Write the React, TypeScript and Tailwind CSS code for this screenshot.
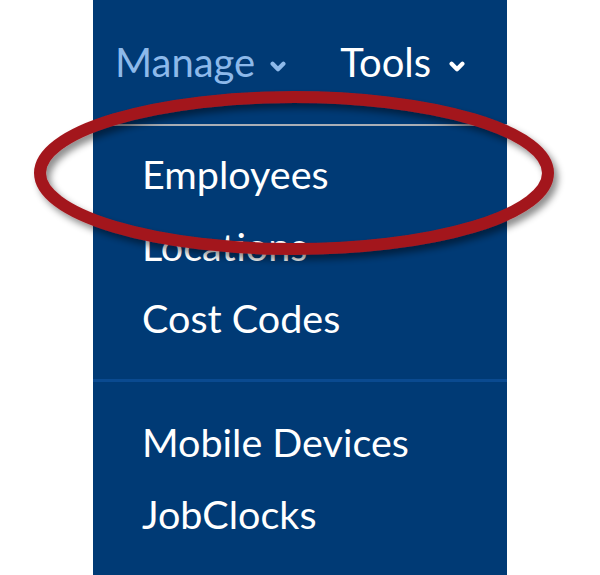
import React from "react";

function Chevron({ color }: { color: string }) {
  return (
    <svg width="16" height="12" viewBox="0 0 16 12" className="block">
      <path d="M2.6 2.8 L8 8.2 L13.4 2.8" fill="none" stroke={color} strokeWidth="4.2" strokeLinecap="round" strokeLinejoin="round" />
    </svg>
  );
}

export default function App() {
  const font = { fontFamily: "Lato, 'Open Sans', sans-serif" };
  return (
    <div className="relative w-[600px] h-[575px] bg-white overflow-hidden" style={font}>
      <div className="ml-[93px] w-[414px] h-[575px] bg-[#003a75] flex flex-col">
        <div className="h-[124px] pt-[26px] flex items-start">
          <div className="flex items-center h-[72px] leading-[72px] text-[40px]">
            <span className="ml-[22px] text-[#8db9ea]">Manage</span>
            <span className="ml-[15px] mt-[9px] flex"><Chevron color="#8db9ea" /></span>
            <span className="ml-[54px] text-white">Tools</span>
            <span className="ml-[18px] mt-[9px] flex"><Chevron color="#ffffff" /></span>
          </div>
        </div>
        <div className="h-[2px] bg-[#a9aeb6]" />
        <div className="pt-[12px] flex flex-col text-white text-[39.5px] leading-[72px] pl-[49px]">
          <div>Employees</div>
          <div>Locations</div>
          <div>Cost Codes</div>
        </div>
        <div className="mt-[25px] h-[3px] bg-[#0a4a90]" />
        <div className="pt-[24px] flex flex-col text-white text-[39.5px] leading-[72px] pl-[49px]">
          <div>Mobile Devices</div>
          <div>JobClocks</div>
        </div>
      </div>
      <svg className="absolute left-0 top-0 pointer-events-none" width="600" height="575" viewBox="0 0 600 575">
        <defs>
          <filter id="sh" x="-20%" y="-40%" width="140%" height="180%">
            <feDropShadow dx="4" dy="5" stdDeviation="3.5" floodColor="#000" floodOpacity="0.45" />
          </filter>
        </defs>
        <ellipse cx="294" cy="173" rx="254" ry="76" fill="none" stroke="#a3181f" strokeWidth="12" filter="url(#sh)" />
      </svg>
    </div>
  );
}
